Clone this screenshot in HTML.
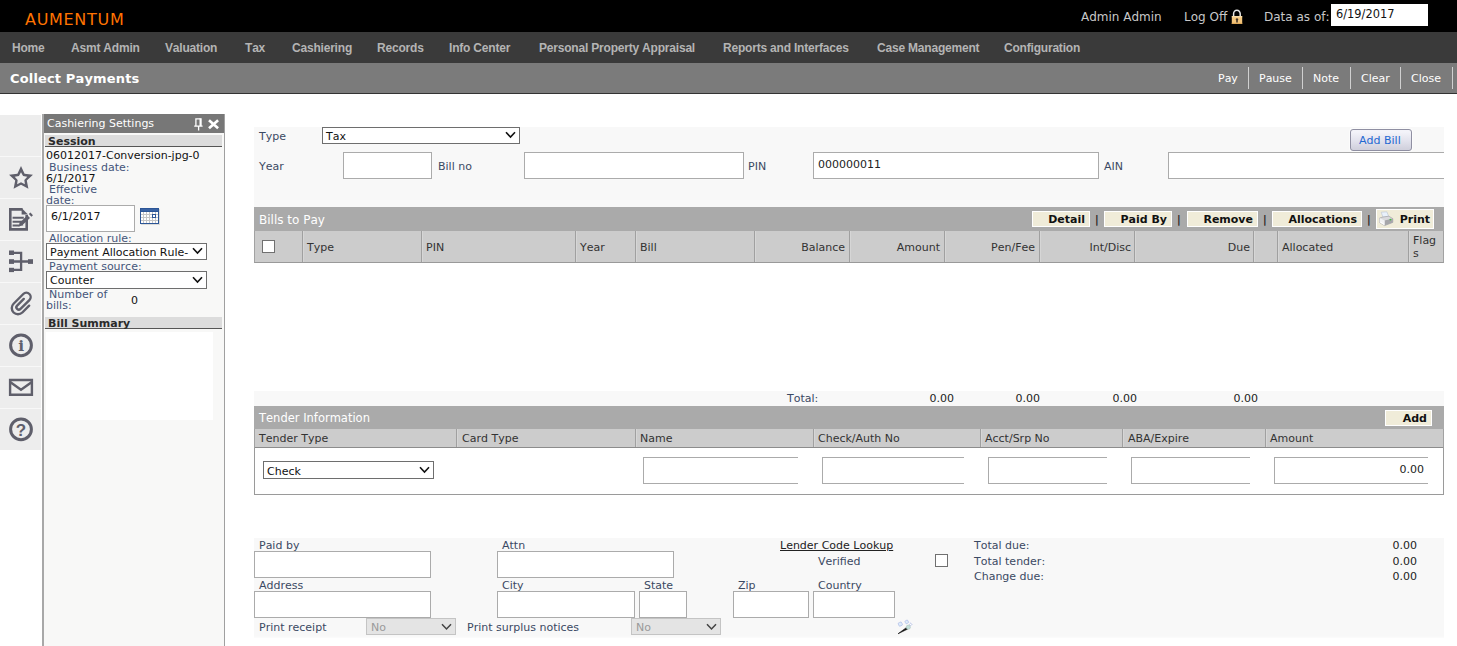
<!DOCTYPE html>
<html>
<head>
<meta charset="utf-8">
<title>Collect Payments</title>
<style>
html,body{margin:0;padding:0;}
body{width:1457px;height:646px;overflow:hidden;background:#fff;position:relative;font-family:"DejaVu Sans","Liberation Sans",sans-serif;font-size:11px;color:#333;font-kerning:none;}
.abs{position:absolute;white-space:nowrap;}
#top{position:absolute;left:0;top:0;width:1457px;height:32px;background:#000;}
#logo{position:absolute;left:25px;top:10px;font-size:16px;line-height:20px;color:#ff7300;letter-spacing:0.7px;}
.topt{position:absolute;top:9px;font-size:12px;line-height:16px;color:#c8c8c8;}
#nav{position:absolute;left:0;top:32px;width:1457px;height:31px;background:#3a3a3a;}
#nav span{position:absolute;top:9px;font-family:"Liberation Sans",sans-serif;font-weight:bold;font-size:12px;line-height:15px;color:#b4b4b4;white-space:nowrap;letter-spacing:-0.2px;}
#title{position:absolute;left:0;top:63px;width:1457px;height:30px;background:#7b7b7b;border-bottom:1px solid #333;}
#title b{position:absolute;left:10px;top:8px;font-size:13px;line-height:16px;color:#fff;letter-spacing:0.15px;}
#title span{position:absolute;top:9px;font-size:11px;line-height:14px;color:#fff;}
#title i{position:absolute;top:4px;width:1px;height:22px;background:#d0d0d0;}
input,select{font-family:"DejaVu Sans",sans-serif;}
.lbl{position:absolute;white-space:nowrap;font-size:11px;line-height:14px;color:#3b4963;margin-top:1px;}
.box{position:absolute;box-sizing:border-box;border:1px solid #ababab;background:#fff;}
.sel{position:absolute;box-sizing:border-box;border:1px solid #6e6e6e;background:#fff;font-size:11px;line-height:13px;color:#111;white-space:nowrap;overflow:hidden;}
.sel span{position:absolute;left:3px;top:0px;}
.sel svg{position:absolute;right:3px;top:3.4px;}

#lbar{position:absolute;left:0;top:115px;width:41px;height:335px;background:#ededed;}
#lbar i{position:absolute;left:0;width:41px;height:1px;background:#f8f8f8;}
#lbar svg{position:absolute;left:0;}
#panel{position:absolute;left:42px;top:114px;width:183px;height:540px;box-sizing:border-box;border-left:2px solid #a8a8a8;border-right:1px solid #a0a0a0;background:#f8f8f7;}
#phead{position:absolute;left:0;top:0;width:180px;height:19px;background:#777;}
#phead span{position:absolute;left:3px;top:3px;font-size:11px;line-height:14px;color:#fff;}
.pbar{position:absolute;left:1px;width:177px;height:11px;background:#dcdcdc;border-bottom:1px solid #555;}
.pbar b{position:absolute;left:3px;top:0px;font-size:11px;line-height:13px;color:#2a2a2a;}
.pl{position:absolute;white-space:nowrap;font-size:11px;line-height:12px;color:#44557a;}
.pv{position:absolute;white-space:nowrap;font-size:11px;line-height:12px;color:#111;}

.bg{position:absolute;left:254px;width:1190px;background:#f8f8f8;}
.bar{position:absolute;left:254px;width:1190px;background:#aaa;}
.bar>span{position:absolute;left:5px;margin-top:1px;font-size:12px;line-height:14px;color:#fff;white-space:nowrap;}
.hdr{position:absolute;left:254px;width:1190px;background:#ccc;box-sizing:border-box;}
.hdr i{position:absolute;top:0;width:1px;height:100%;background:#a0a0a0;box-shadow:1px 0 0 #d6d6d6;}
.hdr span{position:absolute;margin-top:1px;font-size:11px;line-height:14px;color:#333;white-space:nowrap;}
.btn{position:absolute;top:4px;height:16px;background:#f0ecd9;box-sizing:border-box;border:1px solid #fff;}
.btn b{position:absolute;right:4px;top:1px;font-size:11px;line-height:14px;color:#111;white-space:nowrap;}
.bar>span.pipe{position:absolute;top:5px;left:auto;font-size:10px;line-height:14px;font-weight:bold;color:#222;}
.num{position:absolute;margin-top:1px;font-size:11px;line-height:14px;color:#222;white-space:nowrap;text-align:right;}
.cb{position:absolute;width:13px;height:13px;box-sizing:border-box;border:1px solid #707070;background:#fff;}
.dsel{position:absolute;box-sizing:border-box;border:1px solid #c4c4c4;background:#e4e4e4;font-size:11px;line-height:13px;color:#9a9a9a;height:17px;}
.dsel span{position:absolute;left:4px;top:2px;}
.dsel svg{position:absolute;right:3px;top:3.5px;}
</style>
</head>
<body>
<div id="top">
  <div id="logo">AUMENTUM</div>
  <div class="topt" style="left:1081px">Admin Admin</div>
  <div class="topt" style="left:1184px">Log Off</div>
<svg style="position:absolute;left:1230px;top:9px" width="14" height="16" viewBox="0 0 14 16">
    <path d="M3.6 7.5 V4.8 A3.3 3.6 0 0 1 10.2 4.8 V7.5" fill="none" stroke="#e6e6e6" stroke-width="1.5"/>
    <rect x="1.8" y="7.1" width="10.4" height="7.9" fill="#f3c57c"/>
    <rect x="1.8" y="7.1" width="10.4" height="1.2" fill="#fbe0ae"/>
    <rect x="1.8" y="13.8" width="10.4" height="1.2" fill="#e0aa5a"/>
    <path d="M7 9.2 a1.3 1.3 0 0 1 0.8 2.3 V13.4 H6.2 V11.5 A1.3 1.3 0 0 1 7 9.2 Z" fill="#4a3a2a"/>
  </svg>
  <div class="topt" style="left:1264px">Data as of:</div>
  <div style="position:absolute;left:1331px;top:4px;width:97px;height:22px;background:#fff;"><span style="position:absolute;left:5px;top:3px;font-size:11.4px;line-height:14px;color:#111">6/19/2017</span></div>
</div>
<div id="nav">
  <span style="left:12px">Home</span>
  <span style="left:71px">Asmt Admin</span>
  <span style="left:165px">Valuation</span>
  <span style="left:245px">Tax</span>
  <span style="left:292px">Cashiering</span>
  <span style="left:377px">Records</span>
  <span style="left:449px">Info Center</span>
  <span style="left:539px">Personal Property Appraisal</span>
  <span style="left:723px">Reports and Interfaces</span>
  <span style="left:877px">Case Management</span>
  <span style="left:1004px">Configuration</span>
</div>
<div id="title">
  <b>Collect Payments</b>
  <span style="left:1218px">Pay</span><i style="left:1248px"></i>
  <span style="left:1259px">Pause</span><i style="left:1302px"></i>
  <span style="left:1313px">Note</span><i style="left:1350px"></i>
  <span style="left:1361px">Clear</span><i style="left:1400px"></i>
  <span style="left:1411px">Close</span><i style="left:1452px"></i>
</div>

<div id="lbar">
  <i style="top:41px"></i><i style="top:83px"></i><i style="top:125px"></i><i style="top:167px"></i><i style="top:209px"></i><i style="top:251px"></i><i style="top:293px"></i>
  <svg width="41" height="335" viewBox="0 115 41 335" fill="none" stroke="#5f5f6b" stroke-width="2.2" stroke-linejoin="miter">
    <!-- star -->
    <path d="M21.00 166.00 L24.59 173.66 L32.98 174.71 L26.80 180.49 L28.41 188.79 L21.00 184.70 L13.59 188.79 L15.20 180.49 L9.02 174.71 L17.41 173.66 Z M21.00 172.20 L23.06 175.97 L27.28 176.76 L24.33 179.88 L24.88 184.14 L21.00 182.30 L17.12 184.14 L17.67 179.88 L14.72 176.76 L18.94 175.97 Z" fill="#5f5f6b" fill-rule="evenodd" stroke="none"/>
    <!-- doc -->
    <path d="M22.6 209.4 H10.3 V229.4 H26.7 V215" stroke-width="2.6"/>
    <path d="M21.6 208.1 L28 214.6 H21.6 Z" fill="#5f5f6b" stroke="none"/>
    <path d="M12.6 217.8 H23.8 M12.6 221.7 H22 M12.6 225.6 H19.5" stroke-width="2"/>
    <path d="M21 224 L28.7 216.6 M30.1 215.3 L31.7 213.8" stroke-width="3.7"/>
    <path d="M18.6 226.4 L23.4 225.2 L19.9 221.6 Z" fill="#5f5f6b" stroke="none"/>
    <!-- tree -->
    <path d="M14 252.9 H21.1 V269.9 H14 M14 261.5 H28" stroke-width="2.3"/>
    <rect x="9" y="250.5" width="5" height="4.5" fill="#5f5f6b" stroke="none"/>
    <rect x="9" y="259.2" width="5" height="4.7" fill="#5f5f6b" stroke="none"/>
    <rect x="9" y="267.8" width="5" height="4.3" fill="#5f5f6b" stroke="none"/>
    <rect x="28" y="259.2" width="5" height="4.7" fill="#5f5f6b" stroke="none"/>
    <!-- clip -->
    <g transform="translate(18.16 299.16) rotate(-45)"><path d="M3.15 12.4 L-6.47 12.4 A6.2 6.2 0 0 1 -6.47 0 L7.28 0 A4.3 4.3 0 0 1 7.28 8.6 L-5.27 8.6 A2.4 2.4 0 0 1 -5.27 3.8 L4.17 3.8" stroke-width="2.4" stroke-linecap="round"/></g>
    <!-- info -->
    <circle cx="21" cy="345.3" r="10.4" stroke-width="3"/>
    <text x="21.1" y="351.3" text-anchor="middle" font-family="DejaVu Serif, Liberation Serif, serif" font-weight="bold" font-size="15.5" fill="#5f5f6b" stroke="none">i</text>
    <!-- mail -->
    <path d="M10.1 380 H31.9 V394.8 H10.1 Z" stroke-width="2.4"/>
    <path d="M10.1 382 L21 389.8 L31.9 382" stroke-width="2.4"/>
    <!-- help -->
    <circle cx="21" cy="429.3" r="10.4" stroke-width="3"/>
    <text x="20.9" y="435.7" text-anchor="middle" font-family="Liberation Sans, sans-serif" font-weight="bold" font-size="17" fill="#5f5f6b" stroke="none">?</text>
  </svg>
</div>
<div id="panel">
  <div id="phead"><span>Cashiering Settings</span>
    <svg style="position:absolute;left:149px;top:3px" width="30" height="16" viewBox="0 0 30 16">
      <path d="M2.9 9 V1.9 H7.6 M1.2 9.1 H9.6 M5.6 9 V13.6" fill="none" stroke="#fff" stroke-width="1.3"/>
      <path d="M7.6 1.25 V9" fill="none" stroke="#fff" stroke-width="2.2"/>
      <path d="M16 3.3 L25.1 11.2 M25.1 3.3 L16 11.2" fill="none" stroke="#fff" stroke-width="2.7"/>
    </svg>
  </div>
  <div class="pbar" style="top:21px"><b>Session</b></div>
  <div class="pv" style="left:2px;top:36px">06012017-Conversion-jpg-0</div>
  <div class="pl" style="left:5px;top:48px">Business date:</div>
  <div class="pv" style="left:2px;top:59px">6/1/2017</div>
  <div class="pl" style="left:5px;top:70px">Effective</div>
  <div class="pl" style="left:2px;top:81px">date:</div>
  <div class="box" style="left:2px;top:91px;width:89px;height:27px"><span class="pv" style="left:4px;top:5px">6/1/2017</span></div>
  <svg style="position:absolute;left:96px;top:94px" width="20" height="17" viewBox="0 0 20 17" shape-rendering="crispEdges">
    <rect x="1" y="1" width="19" height="16" fill="#c8c8c4" opacity="0.6"/>
    <rect x="0" y="0" width="19" height="16" fill="#2c5697"/>
    <rect x="1" y="1" width="17" height="2" fill="#3a63a3"/>
    <rect x="1" y="4" width="17" height="11" fill="#c6c6c6"/>
    <g fill="#fff"><rect x="1" y="4" width="2" height="2"/><rect x="4" y="4" width="2" height="2"/><rect x="7" y="4" width="2" height="2"/><rect x="10" y="4" width="2" height="2"/><rect x="13" y="4" width="2" height="2"/><rect x="16" y="4" width="2" height="2"/><rect x="1" y="7" width="2" height="2"/><rect x="4" y="7" width="2" height="2"/><rect x="7" y="7" width="2" height="2"/><rect x="10" y="7" width="2" height="2"/><rect x="13" y="7" width="2" height="2"/><rect x="16" y="7" width="2" height="2"/><rect x="1" y="10" width="2" height="2"/><rect x="4" y="10" width="2" height="2"/><rect x="7" y="10" width="2" height="2"/><rect x="10" y="10" width="2" height="2"/><rect x="13" y="10" width="2" height="2"/><rect x="16" y="10" width="2" height="2"/><rect x="1" y="13" width="2" height="2"/><rect x="4" y="13" width="2" height="2"/><rect x="7" y="13" width="2" height="2"/><rect x="10" y="13" width="2" height="2"/><rect x="13" y="13" width="2" height="2"/><rect x="16" y="13" width="2" height="2"/></g>
    <rect x="12" y="6" width="4" height="4" fill="#2c5697"/>
    <rect x="13" y="7" width="2" height="2" fill="#fff"/>
  </svg>
  <div class="pl" style="left:5px;top:119px">Allocation rule:</div>
  <div class="sel" style="left:2px;top:129px;width:161px;height:17px"><span style="top:2px">Payment Allocation Rule-</span><svg width="11" height="8" viewBox="0 0 11 8"><path d="M1 1.2 L5.5 6 L10 1.2" fill="none" stroke="#111" stroke-width="1.6"/></svg></div>
  <div class="pl" style="left:5px;top:147px">Payment source:</div>
  <div class="sel" style="left:2px;top:157px;width:161px;height:18px"><span style="top:2px">Counter</span><svg width="11" height="8" viewBox="0 0 11 8" style="top:4.4px"><path d="M1 1.2 L5.5 6 L10 1.2" fill="none" stroke="#111" stroke-width="1.6"/></svg></div>
  <div class="pl" style="left:5px;top:175px">Number of</div>
  <div class="pl" style="left:2px;top:186px">bills:</div>
  <div class="pv" style="left:87px;top:181px">0</div>
  <div class="pbar" style="top:203px"><b>Bill Summary</b></div>
  <div style="position:absolute;left:2px;top:218px;width:167px;height:88px;background:#fff"></div>
</div>

<div id="main">
<div class="bg" style="top:127px;height:80px"></div>
<div class="lbl" style="left:259px;top:129px">Type</div>
<div class="sel" style="left:322px;top:127px;width:198px;height:17px"><span style="top:2px;left:3px">Tax</span><svg width="11" height="8" viewBox="0 0 11 8"><path d="M1 1.2 L5.5 6 L10 1.2" fill="none" stroke="#111" stroke-width="1.6"/></svg></div>
<div class="lbl" style="left:259px;top:159px">Year</div>
<div class="box" style="left:343px;top:152px;width:89px;height:27px"></div>
<div class="lbl" style="left:438px;top:159px">Bill no</div>
<div class="box" style="left:524px;top:152px;width:220px;height:27px"></div>
<div class="lbl" style="left:748px;top:159px">PIN</div>
<div class="box" style="left:813px;top:152px;width:286px;height:27px"><span class="pv" style="left:4px;top:6px;color:#222">000000011</span></div>
<div class="lbl" style="left:1104px;top:159px">AIN</div>
<div class="box" style="left:1168px;top:152px;width:280px;height:27px;border-right:none;width:276px"></div>
<div style="position:absolute;left:1350px;top:129px;width:62px;height:22px;box-sizing:border-box;border:1px solid #8f8fa2;border-radius:3px;background:linear-gradient(#f3f3f9 10%,#e4e4ee 50%,#d1d1dd 95%);box-shadow:0 0 0 1px rgba(255,255,255,0.6);"><span style="position:absolute;left:8px;top:4px;font-size:11px;line-height:14px;color:#1f68d2;white-space:nowrap">Add Bill</span></div>

<div class="bar" style="top:207px;height:24px"><span style="top:5px">Bills to Pay</span>
  <div class="btn" style="left:778px;width:58px"><b>Detail</b></div><span class="pipe" style="left:841px">|</span>
  <div class="btn" style="left:850px;width:68px"><b>Paid By</b></div><span class="pipe" style="left:923px">|</span>
  <div class="btn" style="left:933px;width:71px"><b>Remove</b></div><span class="pipe" style="left:1009px">|</span>
  <div class="btn" style="left:1018px;width:90px"><b>Allocations</b></div><span class="pipe" style="left:1113px">|</span>
  <div class="btn" style="left:1122px;width:58px;top:2px;height:20px;background:#f0ecd9"><b style="top:3px;right:3px">Print</b>
    <svg style="position:absolute;left:1px;top:1px" width="17" height="17" viewBox="0 0 17 17">
      <path d="M3.2 1.2 L8.8 0.8 L10.8 5.6 L5 6.4 Z" fill="#e9f1fb" stroke="#b9c3d2" stroke-width="0.6"/>
      <path d="M1.6 7 L5 6 L10.8 5.2 L14.8 7.6 L14.8 11.4 L6.6 14.6 L1.6 11.6 Z" fill="#d9d9dc" stroke="#9a9a9f" stroke-width="0.6"/>
      <path d="M6.6 9.4 L14.8 7.6 L14.8 11.4 L6.6 14.6 Z" fill="#a6a6aa"/>
      <path d="M1.6 7 L6.6 9.4 L6.6 14.6 L1.6 11.6 Z" fill="#f1f1f3"/>
      <path d="M2.4 10.6 L6 12.8 L6 13.8 L2.4 11.6 Z" fill="#fff"/>
      <circle cx="12.4" cy="8.6" r="0.9" fill="#3ec23e"/>
    </svg>
  </div>
</div>
<div class="hdr" style="top:231px;height:32px;border-left:1px solid #a2a2a2;border-bottom:1px solid #999;border-right:1px solid #a2a2a2">
  <div class="cb" style="left:7px;top:9px"></div>
  <i style="left:47px"></i><span style="left:52px;top:9px">Type</span>
  <i style="left:166px"></i><span style="left:171px;top:9px">PIN</span>
  <i style="left:320px"></i><span style="left:325px;top:9px">Year</span>
  <i style="left:380px"></i><span style="left:385px;top:9px">Bill</span>
  <i style="left:499px"></i><span style="right:598px;top:9px">Balance</span>
  <i style="left:594px"></i><span style="right:503px;top:9px">Amount</span>
  <i style="left:689px"></i><span style="right:408px;top:9px">Pen/Fee</span>
  <i style="left:784px"></i><span style="right:312px;top:9px">Int/Disc</span>
  <i style="left:879px"></i><span style="right:193px;top:9px">Due</span>
  <i style="left:998px"></i>
  <i style="left:1022px"></i><span style="left:1027px;top:9px">Allocated</span>
  <i style="left:1153px"></i><span style="left:1158px;top:2px;line-height:13px">Flag<br>s</span>
</div>

<div class="bg" style="top:391px;height:15px"></div>
<div class="lbl" style="left:787px;top:391px">Total:</div>
<div class="num" style="right:503px;top:391px">0.00</div>
<div class="num" style="right:417px;top:391px">0.00</div>
<div class="num" style="right:320px;top:391px">0.00</div>
<div class="num" style="right:199px;top:391px">0.00</div>

<div class="bar" style="top:406px;height:23px"><span style="top:4px;font-size:11.5px">Tender Information</span>
  <div class="btn" style="left:1131px;width:47px;top:4px;height:16px"><b style="top:1px">Add</b></div>
</div>
<div class="hdr" style="top:429px;height:20px;border-left:1px solid #a2a2a2;border-right:1px solid #a2a2a2;border-bottom:2px solid #8c8c8c">
  <span style="left:4px;top:2px">Tender Type</span>
  <i style="left:201px"></i><span style="left:207px;top:2px">Card Type</span>
  <i style="left:380px"></i><span style="left:385px;top:2px">Name</span>
  <i style="left:558px"></i><span style="left:563px;top:2px">Check/Auth No</span>
  <i style="left:725px"></i><span style="left:730px;top:2px">Acct/Srp No</span>
  <i style="left:867px"></i><span style="left:873px;top:2px">ABA/Expire</span>
  <i style="left:1010px"></i><span style="left:1015px;top:2px">Amount</span>
</div>
<div style="position:absolute;left:254px;top:448px;width:1190px;height:47px;box-sizing:border-box;border:1px solid #9a9a9a;border-top:none;background:#fff"></div>
<div class="sel" style="left:263px;top:461px;width:171px;height:18px"><span style="top:3px;left:3px">Check</span><svg style="top:4.4px" width="11" height="8" viewBox="0 0 11 8"><path d="M1 1.2 L5.5 6 L10 1.2" fill="none" stroke="#111" stroke-width="1.6"/></svg></div>
<div class="box" style="left:643px;top:457px;width:155px;height:27px;border-right:none"></div>
<div class="box" style="left:822px;top:457px;width:142px;height:27px;border-right:none"></div>
<div class="box" style="left:988px;top:457px;width:119px;height:27px;border-right:none"></div>
<div class="box" style="left:1131px;top:457px;width:119px;height:27px;border-right:none"></div>
<div class="box" style="left:1274px;top:457px;width:154px;height:27px;border-right:none"><span class="pv" style="right:4px;top:6px;color:#222">0.00</span></div>

<div class="bg" style="top:538px;height:100px;background:linear-gradient(#f8f8f8 98%,#fcfcfc)"></div>
<div class="lbl" style="left:259px;top:538px">Paid by</div>
<div class="box" style="left:254px;top:551px;width:177px;height:27px"></div>
<div class="lbl" style="left:502px;top:538px">Attn</div>
<div class="box" style="left:497px;top:551px;width:177px;height:27px"></div>
<div class="lbl" style="left:259px;top:578px">Address</div>
<div class="box" style="left:254px;top:591px;width:177px;height:27px"></div>
<div class="lbl" style="left:502px;top:578px">City</div>
<div class="box" style="left:497px;top:591px;width:138px;height:27px"></div>
<div class="lbl" style="left:644px;top:578px">State</div>
<div class="box" style="left:639px;top:591px;width:48px;height:27px"></div>
<div class="lbl" style="left:738px;top:578px">Zip</div>
<div class="box" style="left:733px;top:591px;width:76px;height:27px"></div>
<div class="lbl" style="left:818px;top:578px">Country</div>
<div class="box" style="left:813px;top:591px;width:82px;height:27px"></div>
<div class="lbl" style="left:259px;top:620px">Print receipt</div>
<div class="dsel" style="left:366px;top:618px;width:90px"><span>No</span><svg width="11" height="8" viewBox="0 0 11 8"><path d="M1 1.2 L5.5 6 L10 1.2" fill="none" stroke="#444" stroke-width="1.5"/></svg></div>
<div class="lbl" style="left:467px;top:620px">Print surplus notices</div>
<div class="dsel" style="left:631px;top:618px;width:90px"><span>No</span><svg width="11" height="8" viewBox="0 0 11 8"><path d="M1 1.2 L5.5 6 L10 1.2" fill="none" stroke="#444" stroke-width="1.5"/></svg></div>
<div class="lbl" style="left:780px;top:538px;color:#222;text-decoration:underline">Lender Code Lookup</div>
<div class="lbl" style="left:818px;top:554px">Verified</div>
<div class="cb" style="left:935px;top:554px"></div>
<div class="lbl" style="left:974px;top:538px">Total due:</div>
<div class="lbl" style="left:974px;top:554px">Total tender:</div>
<div class="lbl" style="left:974px;top:569px">Change due:</div>
<div class="num" style="right:40px;top:538px">0.00</div>
<div class="num" style="right:40px;top:554px">0.00</div>
<div class="num" style="right:40px;top:569px">0.00</div>
<svg style="position:absolute;left:897px;top:619px" width="17" height="16" viewBox="0 0 17 16">
  <path d="M1 14.8 L9.6 8.4 L10.8 10 Z" fill="#111" stroke="#111" stroke-width="0.6" stroke-linejoin="round"/>
  <circle cx="11.3" cy="8.2" r="2.1" fill="#c2e0da" stroke="#a5bfbb" stroke-width="0.5"/>
  <path d="M3.3 2.8 L4.6 3.8 L5.6 5.1 L4.6 6.4 L3.3 7.4 L2.0 6.4 L1.0 5.1 L2.0 3.8 Z" fill="#dcebf9" stroke="#a9b7e6" stroke-width="0.6" stroke-linejoin="round" transform="rotate(20 3.3 5.1)"/>
  <path d="M9.8 0.9 L10.9 1.8 L11.8 2.9 L10.9 4.0 L9.8 4.9 L8.7 4.0 L7.8 2.9 L8.7 1.8 Z" fill="#dcebf9" stroke="#a9b7e6" stroke-width="0.6" stroke-linejoin="round" transform="rotate(15 9.8 2.8)"/>
  <path d="M13.7 4.1 L14.4 4.7 L15.0 5.4 L14.4 6.1 L13.7 6.7 L13.0 6.1 L12.4 5.4 L13.0 4.7 Z" fill="#fff" stroke="#9aa9dc" stroke-width="0.6"/>
</svg>
</div>
</body>
</html>
